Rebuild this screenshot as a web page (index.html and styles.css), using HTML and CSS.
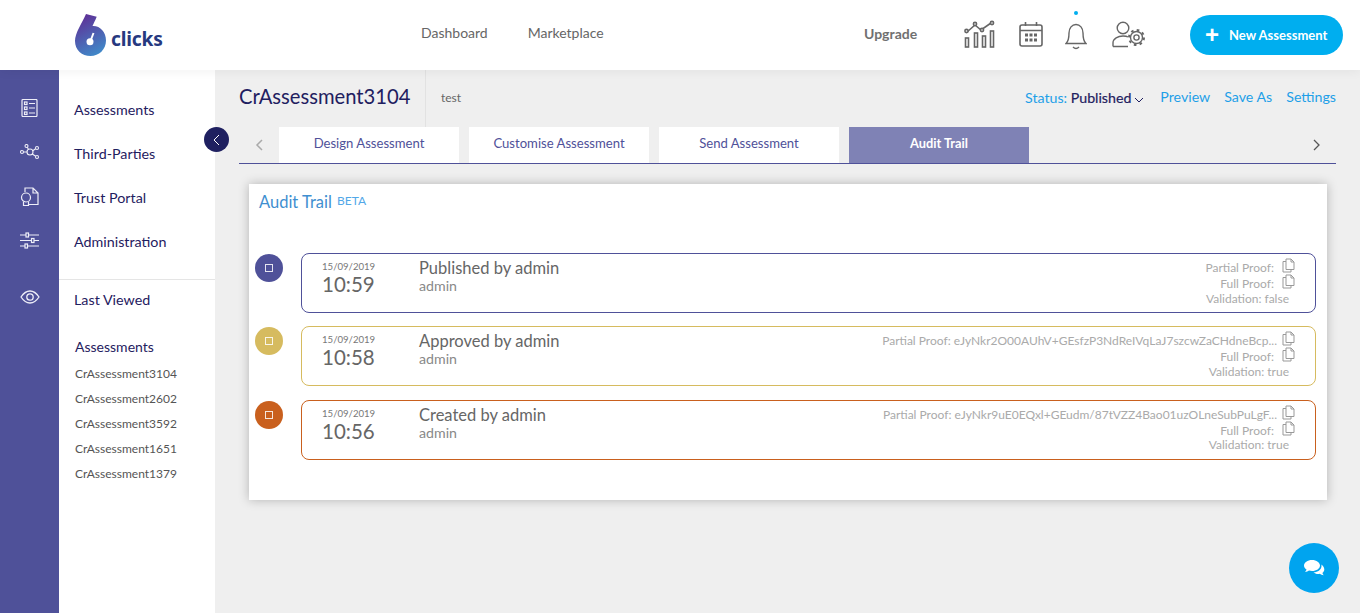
FILE: index.html
```html
<!DOCTYPE html>
<html lang="en">
<head>
<meta charset="utf-8">
<title>Audit Trail</title>
<link rel="stylesheet" href="styles.css">
</head>
<body>
<svg class="defs" width="0" height="0" aria-hidden="true">
  <defs>
    <linearGradient id="logoGrad" x1="0.3" y1="0" x2="0.7" y2="1">
      <stop offset="0" stop-color="#5f2f96"/>
      <stop offset="1" stop-color="#3f8bca"/>
    </linearGradient>
    <symbol id="copy" viewBox="0 0 13 15">
      <path d="M4 1h5l3 3v7.5H4z M9 1v3h3 M4 3.500H1v10.500h8v-2.500" fill="none" stroke="currentColor" stroke-width="1"/>
    </symbol>
  </defs>
</svg>
<header class="topbar">
  <a class="logo">
    <svg width="34" height="44" viewBox="0 0 34 44">
      <path d="M12 1 L22.700 3.700 C21 8 19.500 10.500 18.500 13 C26 12.500 32 19 32 27.500 C32 36.500 25 43 16.500 43 C8 43 1 37 1 28 C1 20 8 10 12 1Z" fill="url(#logoGrad)"/>
      <circle cx="16" cy="28.700" r="3.500" fill="#fff"/>
      <path d="M16.500 28 L19.500 20" stroke="#fff" stroke-width="2"/>
    </svg>
    <span class="logo-text">clicks</span>
  </a>
  <nav class="topnav">
    <a>Dashboard</a>
    <a>Marketplace</a>
  </nav>
  <a class="upgrade">Upgrade</a>
  <div class="top-icons">
    <svg class="ic-chart" width="32" height="28" viewBox="0 0 32 28" fill="none" stroke="#666" stroke-width="1.600">
      <path d="M3 12 L11 5 L17 10 L27 3"/>
      <circle cx="2.500" cy="11" r="1.600" fill="#fff"/><circle cx="11" cy="4" r="1.600" fill="#fff"/><circle cx="18" cy="10" r="1.600" fill="#fff"/><circle cx="28" cy="3" r="1.600" fill="#fff"/>
      <rect x="1.500" y="18" width="3" height="9"/><rect x="10.500" y="13" width="3" height="14"/><rect x="18.500" y="16" width="3" height="11"/><rect x="26.500" y="11" width="3" height="16"/>
    </svg>
    <svg class="ic-cal" width="24" height="26" viewBox="0 0 24 26" fill="none" stroke="#666" stroke-width="1.600">
      <rect x="1" y="4" width="22" height="21" rx="2"/><path d="M1 9.500H23M6.500 1V5M17.500 1V5"/>
      <path d="M6 14h3M10.500 14h3M15 14h3M6 19h3M10.500 19h3M15 19h3" stroke-width="3"/>
    </svg>
    <span class="bell-wrap">
      <span class="bell-dot"></span>
      <svg width="22" height="28" viewBox="0 0 22 28" fill="none" stroke="#666" stroke-width="1.400">
        <path d="M1 21.500 C4 19 4 15 4 11 C4 6 7 2.500 11 2.500 C15 2.500 18 6 18 11 C18 15 18 19 21 21.500Z"/>
        <path d="M8 25 Q11 28 14 25"/>
      </svg>
    </span>
    <svg class="ic-user" width="34" height="28" viewBox="0 0 34 28" fill="none" stroke="#666" stroke-width="1.400">
      <circle cx="11" cy="8" r="5.800"/>
      <path d="M1 26.500 V23 C1 18.500 6 16 11 16 C13 16 15 16.300 16 17 M1 26.500 H16"/>
      <circle cx="24.500" cy="17.500" r="2.600"/>
      <circle cx="24.500" cy="17.500" r="6"/>
      <circle cx="24.500" cy="17.500" r="7.500" stroke-width="2" stroke-dasharray="2.600 3.290"/>
    </svg>
  </div>
  <a class="new-btn"><span class="plus">+</span>New Assessment</a>
</header>

<div class="body-row">
  <aside class="rail">
    <div class="rail-top">
      <span class="rail-cell"><svg width="17" height="18" viewBox="0 0 17 18" fill="none" stroke="#eeeef8" stroke-width="1.200">
        <rect x="1" y="0.500" width="15" height="17" rx="1"/>
        <rect x="3.500" y="3" width="2.500" height="2.500"/><rect x="3.500" y="8" width="2.500" height="2.500"/><rect x="3.500" y="13" width="2.500" height="2.500"/>
        <path d="M8 4.500H14M8 9H14M8 14H14"/>
      </svg></span>
      <span class="rail-cell"><svg width="20" height="16" viewBox="0 0 20 16" fill="none" stroke="#eeeef8" stroke-width="1.100">
        <circle cx="10" cy="8" r="3"/><circle cx="6.500" cy="2" r="1.500"/><circle cx="17" cy="4" r="1.500"/><circle cx="2" cy="8" r="1.500"/><circle cx="17" cy="13" r="1.500"/>
        <path d="M8.500 5.500L7.300 3.300M12.800 6.800L15.600 4.700M7 8H3.500M12.300 10L15.700 12.300"/>
      </svg></span>
      <span class="rail-cell"><svg width="19" height="19" viewBox="0 0 19 19" fill="none" stroke="#eeeef8" stroke-width="1.200">
        <path d="M5 5V1H13L18 6V17.500H9M13 1V6H18"/>
        <circle cx="6" cy="10.500" r="4.500"/><path d="M3.500 14.500V18.500H8.500V14.500"/>
      </svg></span>
      <span class="rail-cell"><svg width="19" height="17" viewBox="0 0 19 17" fill="none" stroke="#eeeef8" stroke-width="1.200">
        <path d="M0 3H19M0 8.500H19M0 14H19"/>
        <rect x="6" y="1" width="2.500" height="4" fill="#4f5199"/><rect x="11.500" y="6.500" width="2.500" height="4" fill="#4f5199"/><rect x="5" y="12" width="2.500" height="4" fill="#4f5199"/>
      </svg></span>
    </div>
    <div class="rail-bottom">
      <svg width="20" height="14" viewBox="0 0 20 14" fill="none" stroke="#eeeef8" stroke-width="1.300">
        <path d="M1 7C4 2.500 7 1 10 1C13 1 16 2.500 19 7C16 11.500 13 13 10 13C7 13 4 11.500 1 7Z"/>
        <circle cx="10" cy="7" r="3.200"/>
      </svg>
    </div>
  </aside>

  <aside class="sidemenu">
    <ul class="menu">
      <li>Assessments</li>
      <li>Third-Parties</li>
      <li>Trust Portal</li>
      <li>Administration</li>
    </ul>
    <div class="last-viewed">Last Viewed</div>
    <div class="recent">
      <h3>Assessments</h3>
      <a>CrAssessment3104</a>
      <a>CrAssessment2602</a>
      <a>CrAssessment3592</a>
      <a>CrAssessment1651</a>
      <a>CrAssessment1379</a>
    </div>
    <span class="collapse">
      <svg width="7" height="12" viewBox="0 0 7 12" fill="none" stroke="#fff" stroke-width="1"><path d="M6 1L1 6L6 11"/></svg>
    </span>
  </aside>

  <main class="main">
    <div class="title-row">
      <h1>CrAssessment3104</h1>
      <div class="desc">test</div>
      <div class="actions">
        <span class="status">Status: <b>Published</b><svg width="10" height="6" viewBox="0 0 10 6" fill="none" stroke="#1f1f5f" stroke-width="1"><path d="M1 1L5 5L9 1"/></svg></span>
        <a>Preview</a>
        <a>Save As</a>
        <a>Settings</a>
      </div>
    </div>
    <div class="tabs">
      <svg class="tab-arrow" width="8" height="12" viewBox="0 0 8 12" fill="none" stroke="#aaa" stroke-width="1.500"><path d="M7 1L2 6L7 11"/></svg>
      <a class="tab">Design Assessment</a>
      <a class="tab">Customise Assessment</a>
      <a class="tab">Send Assessment</a>
      <a class="tab active">Audit Trail</a>
      <svg class="tab-next" width="8" height="12" viewBox="0 0 8 12" fill="none" stroke="#555" stroke-width="1.300"><path d="M1 1L6 6L1 11"/></svg>
    </div>

    <section class="panel">
      <h2>Audit Trail <sup>BETA</sup></h2>
      <div class="timeline">
        <div class="event blue">
          <span class="dot"><i></i></span>
          <div class="card">
            <div class="when"><small>15/09/2019</small><strong>10:59</strong></div>
            <div class="what"><p>Published by admin</p><span>admin</span></div>
            <div class="proof">
              <div>Partial Proof: <svg width="13" height="15"><use href="#copy"/></svg></div>
              <div>Full Proof: <svg width="13" height="15"><use href="#copy"/></svg></div>
              <div class="val">Validation: false</div>
            </div>
          </div>
        </div>
        <div class="event gold">
          <span class="dot"><i></i></span>
          <div class="card">
            <div class="when"><small>15/09/2019</small><strong>10:58</strong></div>
            <div class="what"><p>Approved by admin</p><span>admin</span></div>
            <div class="proof">
              <div>Partial Proof: eJyNkr2O00AUhV+GEsfzP3NdReIVqLaJ7szcwZaCHdneBcp...<svg width="13" height="15"><use href="#copy"/></svg></div>
              <div>Full Proof: <svg width="13" height="15"><use href="#copy"/></svg></div>
              <div class="val">Validation: true</div>
            </div>
          </div>
        </div>
        <div class="event orange">
          <span class="dot"><i></i></span>
          <div class="card">
            <div class="when"><small>15/09/2019</small><strong>10:56</strong></div>
            <div class="what"><p>Created by admin</p><span>admin</span></div>
            <div class="proof">
              <div>Partial Proof: eJyNkr9uE0EQxl+GEudm/87tVZZ4Bao01uzOLneSubPuLgF...<svg width="13" height="15"><use href="#copy"/></svg></div>
              <div>Full Proof: <svg width="13" height="15"><use href="#copy"/></svg></div>
              <div class="val">Validation: true</div>
            </div>
          </div>
        </div>
      </div>
    </section>
    <a class="chat">
      <svg width="22" height="18" viewBox="0 0 22 18" fill="#fff">
        <path d="M9 1C4.500 1 1 3.500 1 6.500C1 8.200 2 9.600 3.500 10.600C3.300 11.500 2.600 12.500 2 13C3.500 13 5 12.300 6 11.600C7 11.900 8 12 9 12C13.500 12 17 9.500 17 6.500C17 3.500 13.500 1 9 1Z"/>
        <path d="M18.300 5.500C18.500 6 18.500 6.500 18.500 7C18.500 10.500 15 13.200 10.500 13.500C11.700 14.400 13.300 15 15 15C15.600 15 16.200 14.900 16.800 14.800C17.800 15.500 19.300 16.300 20.800 16.300C20.200 15.700 19.600 14.800 19.400 13.900C20.600 13 21.300 11.800 21.300 10.500C21.300 8.500 20.100 6.700 18.300 5.500Z"/>
      </svg>
    </a>
  </main>
</div>
</body>
</html>
```
FILE: styles.css
```css
* { box-sizing: border-box; }
html, body { height: 100%; }
body {
  margin: 0;
  height: 613px;
  overflow: hidden;
  font-family: "Lato", "Liberation Sans", sans-serif;
  color: #555;
  background: #efefef;
  display: flex;
  flex-direction: column;
}
.defs { position: absolute; }
a { text-decoration: none; cursor: pointer; }

.topbar {
  height: 70px;
  flex: none;
  background: #fff;
  display: flex;
  align-items: center;
  position: relative;
  z-index: 2;
  box-shadow: 0 2px 10px rgba(0,0,0,.05);
}
.logo { display: flex; align-items: center; margin-left: 74px; width: 347px; height: 44px; margin-top: -1px; }
.logo-text { font-family: "Noto Sans", "Lato", sans-serif; font-weight: 700; font-size: 19.200px; color: #26397f; margin: 8px 0 0 3px; letter-spacing: -.2px; }
.topnav { display: flex; gap: 40px; font-size: 14px; color: #666; margin-top: -6px; width: 443px; }
.upgrade { font-size: 14px; font-weight: 700; color: #707070; margin-top: -3px; width: 100px; }
.top-icons { display: flex; align-items: center; width: 226px; }
.top-icons > svg, .bell-wrap { flex: none; }
.ic-chart { margin-top: -2px; }
.ic-cal { margin: -2px 0 0 23px; }
.bell-wrap { position: relative; margin: 1px 0 0 22px; display: flex; }
.bell-dot { position: absolute; width: 4px; height: 4px; border-radius: 50%; background: #00aeef; left: 9px; top: -11px; }
.ic-user { margin: -2px 0 0 25px; }
.new-btn {
  width: 153px;
  height: 40px;
  border-radius: 20px;
  background: #00aeef;
  color: #fff;
  font-size: 13px;
  font-weight: 700;
  display: flex;
  align-items: center;
  padding-left: 15px;
}
.plus { font-size: 24px; line-height: 20px; font-weight: 700; margin-right: 10px; font-family: "Liberation Sans", sans-serif; }

.body-row { flex: 1; display: flex; min-height: 0; }
.rail { width: 59px; flex: none; background: #4f5199; display: flex; flex-direction: column; align-items: center; padding-top: 16px; }
.rail-top { display: flex; flex-direction: column; align-items: center; }
.rail-cell { height: 44px; display: flex; align-items: center; justify-content: center; }
.rail-bottom { margin-top: 28px; display: flex; }

.sidemenu { width: 156px; flex: none; background: #fff; position: relative; padding-top: 18px; color: #1f2060; }
.menu { list-style: none; margin: 0; padding: 0 0 15px 15px; border-bottom: 1px solid #e5e5e5; font-size: 14.300px; height: 192px; }
.menu li { height: 44px; line-height: 44px; }
.last-viewed { font-size: 14.300px; padding: 11px 0 0 15px; line-height: 17px; }
.recent { padding: 30px 0 0 16px; }
.recent h3 { margin: 0 0 6px; font-size: 14px; font-weight: 400; line-height: 17px; color: #1f2060; }
.recent a { display: block; font-size: 12px; line-height: 25px; color: #555; }
.collapse { position: absolute; width: 25px; height: 25px; border-radius: 50%; background: #1f2060; top: 57px; left: 145px; display: flex; align-items: center; justify-content: center; }

.main { flex: 1; position: relative; padding: 0 24px; min-width: 0; }
.title-row { display: flex; align-items: center; height: 57px; }
.title-row h1 { margin: 0; font-size: 20.200px; font-weight: 400; color: #1f2060; width: 186px; line-height: 25px; margin-top: -4px; flex: none; }
.desc { border-left: 1px solid #e2e2e2; height: 57px; padding: 20px 0 0 15px; font-size: 12px; color: #666; }
.actions { margin-left: auto; display: flex; gap: 14px; font-size: 14.200px; color: #1e9fe8; margin-top: -4px; align-items: center; }
.status b { font-weight: 400; color: #1f2060; -webkit-text-stroke: .2px #1f2060; }
.status { margin-top: 2px; margin-right: 2px; }
.status svg { margin-left: 3px; }

.tabs { display: flex; align-items: stretch; height: 37px; border-bottom: 1px solid #4f5199; position: relative; }
.tab-arrow { margin: 12px 16px 0 16px; flex: none; }
.tab { width: 180px; margin-right: 10px; background: #fff; color: #4f5199; font-size: 13.100px; text-align: center; line-height: 33px; }
.tab.active { background: #7f82b5; color: #fff; font-weight: 700; font-size: 12.800px; margin: 0; }
.tab-next { margin: 12px 15px 0 auto; flex: none; }

.panel { margin: 20px 9px 0 10px; height: 316px; background: #fff; box-shadow: 0 0 10px rgba(0,0,0,.25); padding: 9px 11px 0 10px; }
.panel h2 { margin: 0; font-size: 16.500px; font-weight: 400; color: #3f8fd0; line-height: 19px; height: 60px; }
.panel sup { font-size: 12px; color: #52a8e8; vertical-align: 3px; line-height: 0; margin-left: 1px; }

.timeline { display: flex; flex-direction: column; gap: 13.400px; }
.event { display: flex; gap: 18px; --c: #4f5199; }
.event.gold { --c: #d6bb5f; }
.event.orange { --c: #c9601e; }
.dot { width: 28px; height: 28px; border-radius: 50%; background: var(--c); flex: none; display: flex; align-items: center; justify-content: center; margin-top: 1px; margin-left: -4px; }
.dot i { width: 8px; height: 8px; border: 1px solid rgba(255,255,255,.85); display: block; }
.card { flex: 1; height: 60px; border: 1px solid var(--c); border-radius: 8px; display: flex; padding: 5px 26px 0 20px; color: #666; background: #fff; }
.when { width: 97px; display: flex; flex-direction: column; }
.when small { font-size: 9.600px; line-height: 13px; color: #777; margin-top: 1px; }
.when strong { font-weight: 400; font-size: 20.500px; line-height: 24px; color: #666; margin-top: -1px; }
.what { width: 300px; }
.what p { margin: 0; font-size: 16.500px; line-height: 18px; color: #666; }
.what span { font-size: 14.200px; line-height: 17px; color: #888; display: block; }
.proof { flex: 1; text-align: right; font-size: 12px; color: #aaa; margin-top: -1px; }
.proof svg { vertical-align: -1px; margin-left: 5px; color: #999; }
.proof > div:not(.val) { white-space: nowrap; margin-right: -6px; height: 16px; line-height: 16px; }
.proof .val { margin-top: .5px; line-height: 15px; }

.chat { position: absolute; right: 21px; bottom: 20px; width: 50px; height: 50px; border-radius: 50%; background: #00a4ef; display: flex; align-items: center; justify-content: center; }
```
